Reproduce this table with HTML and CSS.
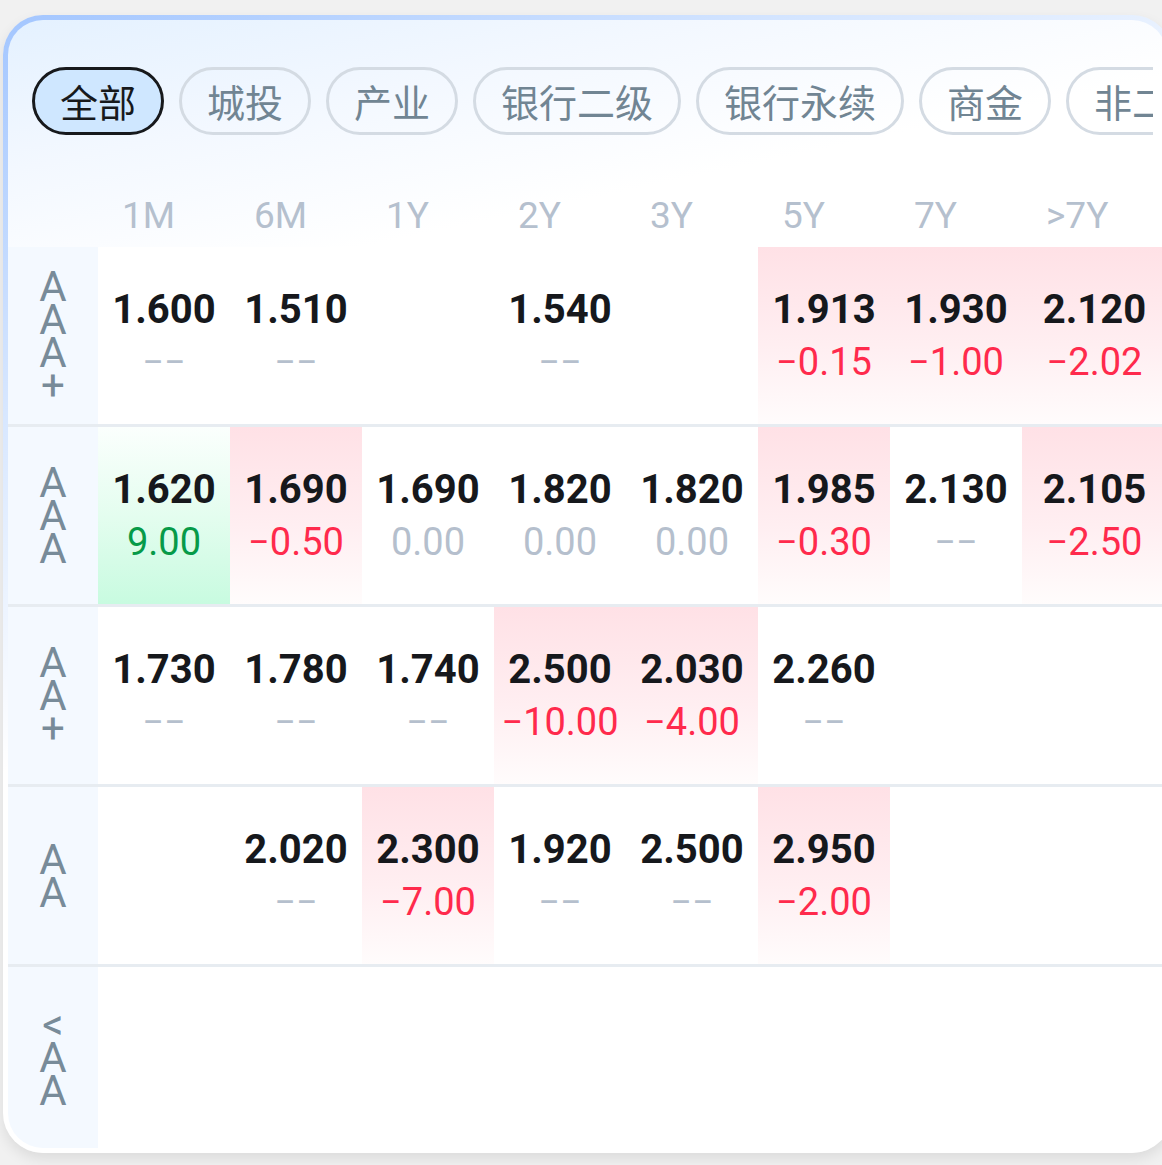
FILE: index.html
```html
<!DOCTYPE html>
<html lang="zh-CN">
<head>
<meta charset="utf-8">
<title>收益率矩阵</title>
<link rel="stylesheet" href="styles.css">
</head>
<body>
<div class="card">
  <div class="tabs">
    <div class="tab active">全部</div>
    <div class="tab">城投</div>
    <div class="tab">产业</div>
    <div class="tab">银行二级</div>
    <div class="tab">银行永续</div>
    <div class="tab">商金</div>
    <div class="tab">非二永</div>
  </div>

  <div class="grid head">
    <div class="corner"></div>
    <div class="hd">1M</div>
    <div class="hd">6M</div>
    <div class="hd">1Y</div>
    <div class="hd">2Y</div>
    <div class="hd">3Y</div>
    <div class="hd">5Y</div>
    <div class="hd">7Y</div>
    <div class="hd">&gt;7Y</div>
  </div>

  <div class="body">
    <div class="grid row">
      <div class="label"><span class="stack">AAA+</span></div>
      <div class="cell"><span class="val">1.600</span><span class="chg none">−−</span></div>
      <div class="cell"><span class="val">1.510</span><span class="chg none">−−</span></div>
      <div class="cell"></div>
      <div class="cell"><span class="val">1.540</span><span class="chg none">−−</span></div>
      <div class="cell"></div>
      <div class="cell down"><span class="val">1.913</span><span class="chg red">−0.15</span></div>
      <div class="cell down"><span class="val">1.930</span><span class="chg red">−1.00</span></div>
      <div class="cell down"><span class="val">2.120</span><span class="chg red">−2.02</span></div>
    </div>

    <div class="grid row">
      <div class="label"><span class="stack">AAA</span></div>
      <div class="cell up"><span class="val">1.620</span><span class="chg green">9.00</span></div>
      <div class="cell down"><span class="val">1.690</span><span class="chg red">−0.50</span></div>
      <div class="cell"><span class="val">1.690</span><span class="chg none">0.00</span></div>
      <div class="cell"><span class="val">1.820</span><span class="chg none">0.00</span></div>
      <div class="cell"><span class="val">1.820</span><span class="chg none">0.00</span></div>
      <div class="cell down"><span class="val">1.985</span><span class="chg red">−0.30</span></div>
      <div class="cell"><span class="val">2.130</span><span class="chg none">−−</span></div>
      <div class="cell down"><span class="val">2.105</span><span class="chg red">−2.50</span></div>
    </div>

    <div class="grid row">
      <div class="label"><span class="stack">AA+</span></div>
      <div class="cell"><span class="val">1.730</span><span class="chg none">−−</span></div>
      <div class="cell"><span class="val">1.780</span><span class="chg none">−−</span></div>
      <div class="cell"><span class="val">1.740</span><span class="chg none">−−</span></div>
      <div class="cell down"><span class="val">2.500</span><span class="chg red">−10.00</span></div>
      <div class="cell down"><span class="val">2.030</span><span class="chg red">−4.00</span></div>
      <div class="cell"><span class="val">2.260</span><span class="chg none">−−</span></div>
      <div class="cell"></div>
      <div class="cell"></div>
    </div>

    <div class="grid row">
      <div class="label"><span class="stack">AA</span></div>
      <div class="cell"></div>
      <div class="cell"><span class="val">2.020</span><span class="chg none">−−</span></div>
      <div class="cell down"><span class="val">2.300</span><span class="chg red">−7.00</span></div>
      <div class="cell"><span class="val">1.920</span><span class="chg none">−−</span></div>
      <div class="cell"><span class="val">2.500</span><span class="chg none">−−</span></div>
      <div class="cell down"><span class="val">2.950</span><span class="chg red">−2.00</span></div>
      <div class="cell"></div>
      <div class="cell"></div>
    </div>

    <div class="grid row last">
      <div class="label"><span class="stack">&lt;AA</span></div>
      <div class="cell"></div>
      <div class="cell"></div>
      <div class="cell"></div>
      <div class="cell"></div>
      <div class="cell"></div>
      <div class="cell"></div>
      <div class="cell"></div>
      <div class="cell"></div>
    </div>
  </div>
</div>
</body>
</html>
```

FILE: styles.css
```css
html, body {
  margin: 0;
  padding: 0;
}

body {
  width: 1162px;
  height: 1165px;
  overflow: hidden;
  background: #f1f1f1;
  font-family: Roboto, "Noto Sans", "Noto Sans CJK SC", sans-serif;
}

.card {
  box-sizing: border-box;
  margin: 15px 0 0 3px;
  width: 1169px;
  height: 1138px;
  border: 5px solid transparent;
  border-radius: 40px;
  background:
    linear-gradient(168deg, #e4f1ff 0%, #f3f8ff 11%, #ffffff 22%) padding-box,
    linear-gradient(155deg, #a3c6ff 0%, #d4e5ff 22%, #ffffff 45%) border-box;
  box-shadow: 0 6px 14px rgba(0, 0, 0, 0.09);
  overflow: hidden;
  display: flex;
  flex-direction: column;
}

/* ---------- tabs ---------- */
.tabs {
  display: flex;
  gap: 15px;
  margin: 47px 14px 0 24px;
  overflow: hidden;
  flex: none;
}

.tab {
  flex: none;
  box-sizing: border-box;
  height: 68px;
  padding: 0 25px 2px;
  border: 3px solid #d4dbe3;
  border-radius: 34px;
  display: flex;
  align-items: center;
  font-family: "Noto Sans CJK SC", sans-serif;
  font-size: 38px;
  color: #718593;
  white-space: nowrap;
}

.tab.active {
  border-color: #17191c;
  background: #cfe7ff;
  color: #17191c;
}

/* ---------- grid ---------- */
.grid {
  display: grid;
  grid-template-columns: 90px repeat(7, 132px) 1fr;
}

.head {
  margin-top: 50px;
  height: 62px;
  align-items: center;
  flex: none;
}

.hd {
  padding-left: 24px;
  font-size: 37px;
  color: #b5c0ce;
  line-height: 62px;
}

.body {
  flex: 1;
  display: flex;
  flex-direction: column;
  background: #ffffff;
}

.row {
  height: 177px;
  border-bottom: 3px solid #e7ecf1;
  flex: none;
}

.row.last {
  border-bottom: none;
  flex: 1;
  height: auto;
}

.label {
  background: #f4f9ff;
  display: flex;
  align-items: center;
  justify-content: center;
}

.stack {
  display: block;
  width: 32px;
  word-break: break-all;
  text-align: center;
  font-size: 42px;
  line-height: 33px;
  color: #788b99;
}

.cell {
  display: flex;
  flex-direction: column;
  align-items: center;
  justify-content: center;
}

.cell.down {
  background: linear-gradient(180deg, #ffe1e6 0%, #ffeef1 55%, #fffcfc 100%);
}

.cell.up {
  background: linear-gradient(180deg, #fbfffd 0%, #e4fdef 50%, #c8fbe0 100%);
}

.val {
  font-size: 40px;
  font-weight: 700;
  line-height: 52px;
  color: #16181c;
}

.chg {
  font-size: 38px;
  line-height: 52px;
}

.chg.none {
  color: #b5bfcd;
}

.chg.red {
  color: #ff2a4c;
}

.chg.green {
  color: #069a48;
}
```
